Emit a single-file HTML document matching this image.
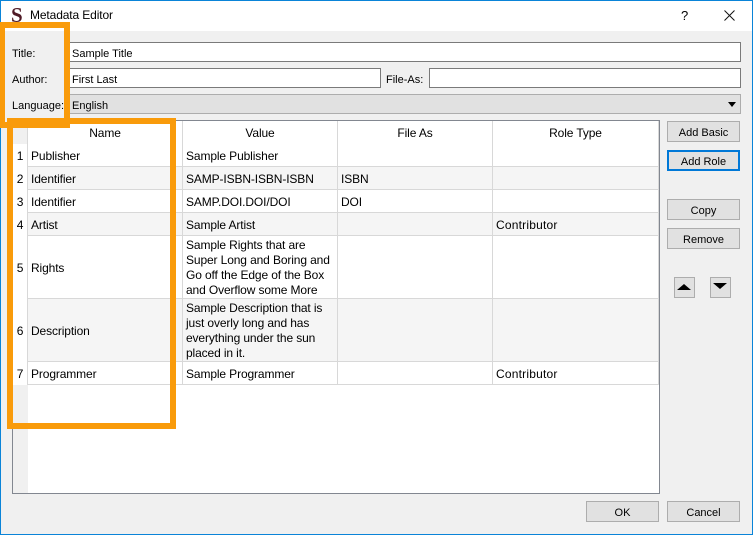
<!DOCTYPE html>
<html><head><meta charset="utf-8"><style>
html,body{margin:0;padding:0}
body{width:753px;height:535px;position:relative;overflow:hidden;background:#f0f0f0;font:12px/15px "Liberation Sans",sans-serif;color:#000}
div{position:absolute;box-sizing:border-box}
.t{white-space:nowrap;height:15px;letter-spacing:-.12px}
.f{font-size:11px;letter-spacing:0}
.c{text-align:center}
.in{background:#fff;border:1px solid #7a7a7a;height:20px}
.btn{background:#e1e1e1;border:1px solid #adadad;text-align:center;height:21px;line-height:22px;font-size:11px;width:73px}
.z{background:#f5f5f5}
.hl{height:1px;background:#d8d8d8;left:28px;width:630px}
.vl{width:1px;background:#d8d8d8}
.o{border:6px solid #f99b0b}
</style></head><body>
<div style="left:0;top:0;width:753px;height:31px;background:#fff"></div>
<div style="left:0;top:0;width:753px;height:535px;border:1px solid #0a84d8"></div>
<div style="left:11px;top:4px;font:bold 21px/22px 'Liberation Serif',serif;color:#4f1a26">S</div>
<div class="t" style="left:30px;top:8px">Metadata Editor</div>
<div class="t" style="left:681px;top:8px;font-size:13px">?</div>
<svg style="position:absolute;left:724px;top:10px" width="11" height="11"><path d="M.5.5l10 10M10.5.5l-10 10" stroke="#111" fill="none"/></svg>

<div class="t f" style="left:12px;top:47px">Title:</div>
<div class="t f" style="left:12px;top:73px">Author:</div>
<div class="t f" style="left:12px;top:99px">Language:</div>
<div class="in" style="left:69px;top:42px;width:672px"></div>
<div class="t f" style="left:72px;top:47px">Sample Title</div>
<div class="in" style="left:69px;top:68px;width:312px"></div>
<div class="t f" style="left:72px;top:73px">First Last</div>
<div class="t f" style="left:386px;top:73px">File-As:</div>
<div class="in" style="left:429px;top:68px;width:312px"></div>
<div style="left:69px;top:94px;width:672px;height:20px;background:#e1e1e1;border:1px solid #adadad"></div>
<div class="t f" style="left:72px;top:99px">English</div>
<svg style="position:absolute;left:728px;top:102px" width="8" height="5"><path d="M0 0h8L4 5z" fill="#000"/></svg>

<div style="left:12px;top:120px;width:648px;height:374px;background:#fff;border:1px solid #828790"></div>
<div style="left:13px;top:121px;width:15px;height:372px;background:#f0f0f0"></div>
<div style="left:13px;top:144px;width:15px;height:241px;background:#fff"></div>
<div class="z" style="left:28px;top:167px;width:630px;height:22px"></div>
<div class="z" style="left:28px;top:213px;width:630px;height:22px"></div>
<div class="z" style="left:28px;top:299px;width:630px;height:62px"></div>
<div class="hl" style="top:166px"></div><div class="hl" style="top:189px"></div><div class="hl" style="top:212px"></div><div class="hl" style="top:235px"></div><div class="hl" style="top:298px"></div><div class="hl" style="top:361px"></div><div class="hl" style="top:384px"></div>
<div class="vl" style="left:27px;top:121px;height:264px"></div>
<div class="vl" style="left:182px;top:121px;height:264px"></div>
<div class="vl" style="left:337px;top:121px;height:264px"></div>
<div class="vl" style="left:492px;top:121px;height:264px"></div>
<div class="vl" style="left:658px;top:121px;height:264px"></div>

<div style="left:0;top:1px;width:0;height:0">
<div class="t c" style="left:28px;width:154px;top:125px">Name</div>
<div class="t c" style="left:183px;width:154px;top:125px">Value</div>
<div class="t c" style="left:338px;width:154px;top:125px">File As</div>
<div class="t c" style="left:493px;width:165px;top:125px">Role Type</div>

<div class="t c" style="left:13px;width:14px;top:148px">1</div><div class="t" style="left:31px;top:148px">Publisher</div><div class="t" style="left:186px;top:148px">Sample Publisher</div>
<div class="t c" style="left:13px;width:14px;top:171px">2</div><div class="t" style="left:31px;top:171px">Identifier</div><div class="t" style="left:186px;top:171px">SAMP-ISBN-ISBN-ISBN</div><div class="t" style="left:341px;top:171px">ISBN</div>
<div class="t c" style="left:13px;width:14px;top:194px">3</div><div class="t" style="left:31px;top:194px">Identifier</div><div class="t" style="left:186px;top:194px">SAMP.DOI.DOI/DOI</div><div class="t" style="left:341px;top:194px">DOI</div>
<div class="t c" style="left:13px;width:14px;top:217px">4</div><div class="t" style="left:31px;top:217px">Artist</div><div class="t" style="left:186px;top:217px">Sample Artist</div><div class="t" style="left:496px;top:217px;letter-spacing:.2px">Contributor</div>
<div class="t c" style="left:13px;width:14px;top:260px">5</div><div class="t" style="left:31px;top:260px">Rights</div>
<div class="t" style="left:186px;top:237px">Sample Rights that are</div><div class="t" style="left:186px;top:252px">Super Long and Boring and</div><div class="t" style="left:186px;top:267px">Go off the Edge of the Box</div><div class="t" style="left:186px;top:282px">and Overflow some More</div>
<div class="t c" style="left:13px;width:14px;top:323px">6</div><div class="t" style="left:31px;top:323px">Description</div>
<div class="t" style="left:186px;top:300px">Sample Description that is</div><div class="t" style="left:186px;top:315px">just overly long and has</div><div class="t" style="left:186px;top:330px">everything under the sun</div><div class="t" style="left:186px;top:345px">placed in it.</div>
<div class="t c" style="left:13px;width:14px;top:366px">7</div><div class="t" style="left:31px;top:366px">Programmer</div><div class="t" style="left:186px;top:366px">Sample Programmer</div><div class="t" style="left:496px;top:366px;letter-spacing:.2px">Contributor</div>
</div>

<div class="btn" style="left:667px;top:121px">Add Basic</div>
<div class="btn" style="left:667px;top:150px;border:2px solid #0078d7;line-height:20px">Add Role</div>
<div class="btn" style="left:667px;top:199px">Copy</div>
<div class="btn" style="left:667px;top:228px">Remove</div>
<div class="btn" style="left:674px;top:277px;width:21px"></div>
<svg style="position:absolute;left:677px;top:284px" width="14" height="6"><path d="M7 0L14 6H0z" fill="#000"/></svg>
<div class="btn" style="left:710px;top:277px;width:21px"></div>
<svg style="position:absolute;left:713px;top:283px" width="14" height="6"><path d="M0 0h14L7 6z" fill="#000"/></svg>
<div class="btn" style="left:586px;top:501px">OK</div>
<div class="btn" style="left:667px;top:501px">Cancel</div>

<div class="o" style="left:-1px;top:22px;width:71px;height:106px"></div>
<div class="o" style="left:7px;top:118px;width:169px;height:311px"></div>
</body></html>
